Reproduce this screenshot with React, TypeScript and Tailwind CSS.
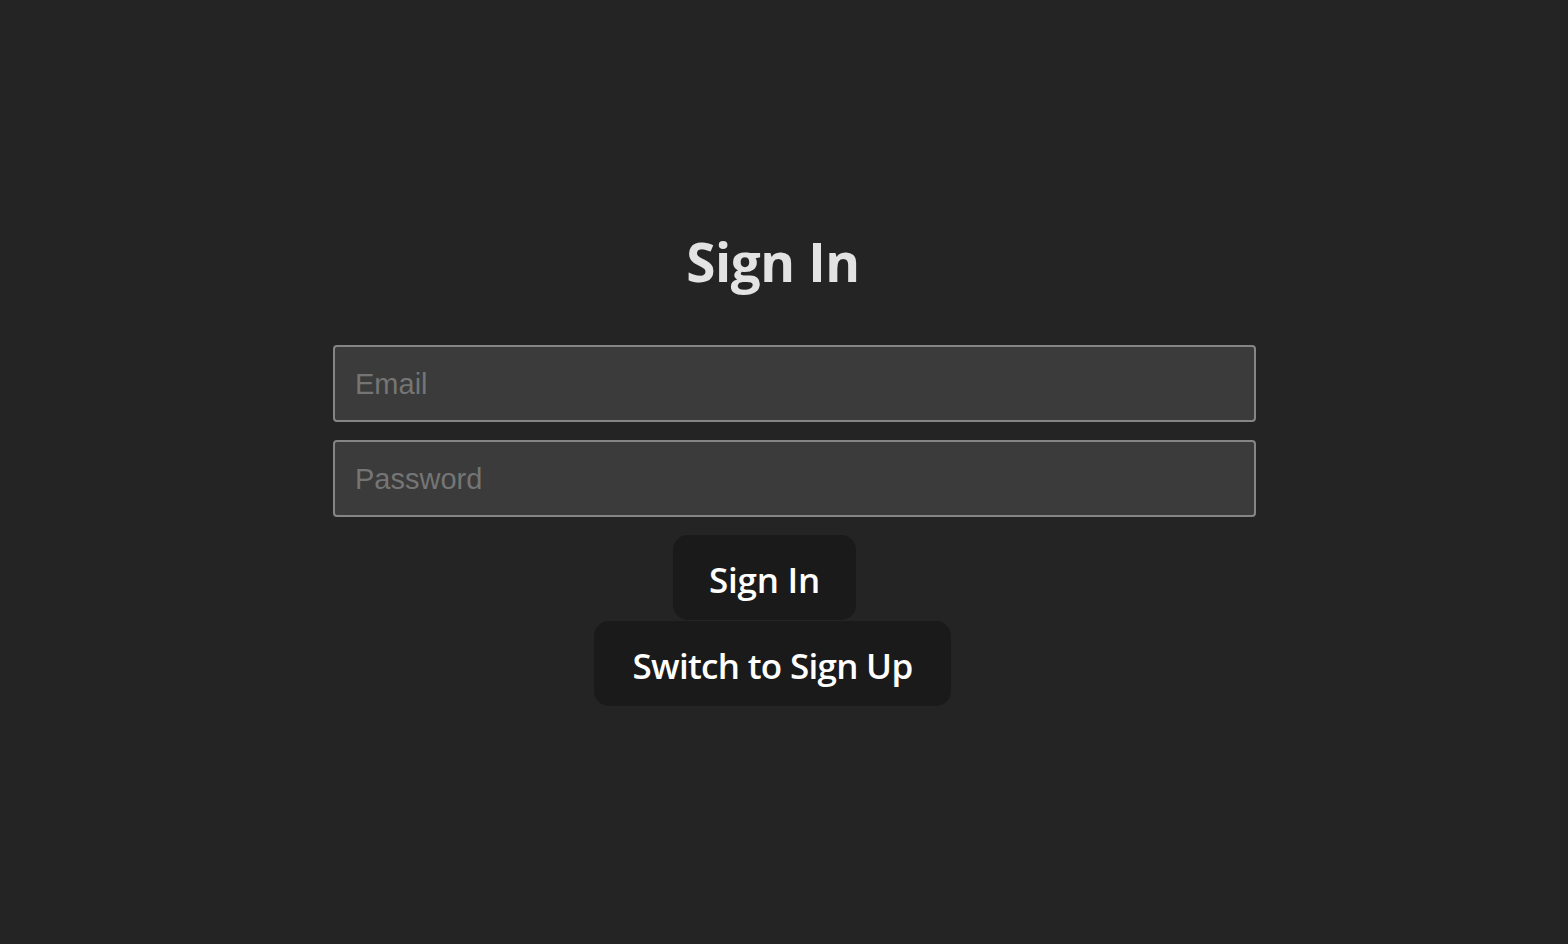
import React, { useState } from 'react';

export default function App() {
  const [isSignUp, setIsSignUp] = useState(false);
  const [email, setEmail] = useState('');
  const [password, setPassword] = useState('');

  return (
    <div className="min-h-screen w-full bg-[#242424] flex flex-col items-center pt-[230px] font-['Open_Sans',sans-serif]">
      <h1 className="ml-[-22px] text-[53px] leading-[64px] font-bold text-[#e3e3e3] tracking-[-0.4px]">
        {isSignUp ? 'Sign Up' : 'Sign In'}
      </h1>

      {/* Form */}
      <form
        onSubmit={(e) => e.preventDefault()}
        className="mt-[51px] flex flex-col items-center"
      >
        <div className="ml-[21px] flex flex-col gap-[18px]">
          <input
            type="email"
            value={email}
            onChange={(e) => setEmail(e.target.value)}
            placeholder="Email"
            className="w-[923px] h-[77px] px-[20px] pt-[2px] rounded-[4px] border-2 border-[#858585] bg-[#3b3b3b] text-[29px] text-white font-['Liberation_Sans',Arial,sans-serif] placeholder:text-[#757575] outline-none"
          />
          <input
            type="password"
            value={password}
            onChange={(e) => setPassword(e.target.value)}
            placeholder="Password"
            className="w-[923px] h-[77px] px-[20px] pt-[2px] rounded-[4px] border-2 border-[#858585] bg-[#3b3b3b] text-[29px] text-white font-['Liberation_Sans',Arial,sans-serif] placeholder:text-[#757575] outline-none"
          />
        </div>

        <button
          type="submit"
          className="mt-[18px] ml-[-39px] w-[183px] h-[85px] pt-[5px] rounded-[15px] bg-[#1a1a1a] text-white text-[35px] font-semibold tracking-[-0.2px] flex items-center justify-center"
        >
          {isSignUp ? 'Sign Up' : 'Sign In'}
        </button>
      </form>

      <button
        type="button"
        onClick={() => setIsSignUp(!isSignUp)}
        className="mt-[1px] ml-[-23px] w-[357px] h-[85px] pt-[5px] rounded-[15px] bg-[#1a1a1a] text-white text-[35px] font-semibold tracking-[-0.7px] flex items-center justify-center"
      >
        {isSignUp ? 'Switch to Sign In' : 'Switch to Sign Up'}
      </button>
    </div>
  );
}
